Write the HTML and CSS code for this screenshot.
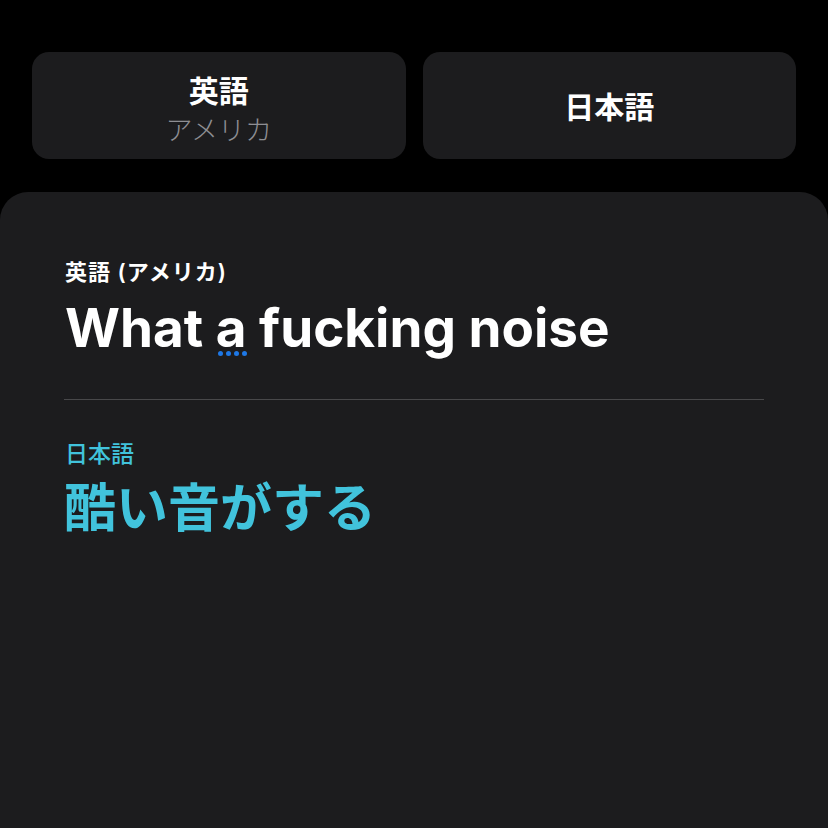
FILE: index.html
```html
<!DOCTYPE html>
<html lang="ja">
<head>
<meta charset="utf-8">
<link rel="stylesheet" href="styles.css">
</head>
<body>
<div class="langs">
  <div class="lang-btn">
    <div class="lang-name">英語</div>
    <div class="lang-sub">アメリカ</div>
  </div>
  <div class="lang-btn">
    <div class="lang-name">日本語</div>
  </div>
</div>
<div class="card">
  <div class="src-label">英語 (アメリカ)</div>
  <div class="src-text">What <span class="word">a<span class="dots"><i></i><i></i><i></i><i></i></span></span> fucking noise</div>
  <div class="divider"></div>
  <div class="dst-label">日本語</div>
  <div class="dst-text">酷い音がする</div>
</div>
</body>
</html>
```
FILE: styles.css
```css
html, body {
  margin: 0;
  padding: 0;
  background: #000;
  height: 828px;
  overflow: hidden;
  font-family: Inter, "Noto Sans CJK JP", sans-serif;
  color: #fff;
}
.langs {
  display: flex;
  gap: 17px;
  padding: 52px 32px 0 32px;
}
.lang-btn {
  flex: 1;
  height: 107px;
  box-sizing: border-box;
  background: #1c1c1e;
  border-radius: 17px;
  display: flex;
  flex-direction: column;
  align-items: center;
  justify-content: center;
}
.lang-btn:first-child {
  padding-top: 6px;
}
.lang-name {
  font-family: "Noto Sans CJK JP", sans-serif;
  font-weight: 700;
  font-size: 30px;
  line-height: 39px;
}
.lang-sub {
  font-family: "Noto Sans CJK JP", sans-serif;
  font-weight: 300;
  font-size: 27px;
  line-height: 39px;
  color: #8e8e93;
}
.card {
  margin-top: 33px;
  background: #1c1c1e;
  border-radius: 28px 28px 0 0;
  height: 636px;
  box-sizing: border-box;
  padding: 65px 64px 0 64px;
}
.src-label {
  font-family: Inter, "Noto Sans CJK JP", sans-serif;
  font-weight: 600;
  font-size: 22px;
  line-height: 30px;
  letter-spacing: 1px;
  padding-left: 1px;
}
.src-text {
  font-family: Inter, sans-serif;
  font-weight: 700;
  font-size: 53px;
  line-height: 64px;
  margin-top: 9px;
  padding-left: 1px;
}
.word {
  position: relative;
}
.dots {
  position: absolute;
  left: 2px;
  bottom: 4px;
  display: flex;
  gap: 3px;
}
.dots i {
  width: 5px;
  height: 5px;
  border-radius: 50%;
  background: #1e78e6;
}
.divider {
  height: 1px;
  background: #48484a;
  margin-top: 39px;
  width: 700px;
}
.dst-label {
  font-family: "Noto Sans CJK JP", sans-serif;
  font-weight: 500;
  font-size: 23px;
  line-height: 30px;
  color: #41c3dc;
  margin-top: 37px;
  padding-left: 1px;
}
.dst-text {
  font-family: "Noto Sans CJK JP", sans-serif;
  font-weight: 700;
  font-size: 52px;
  line-height: 64px;
  color: #41c3dc;
  margin-top: 6px;
}
```
